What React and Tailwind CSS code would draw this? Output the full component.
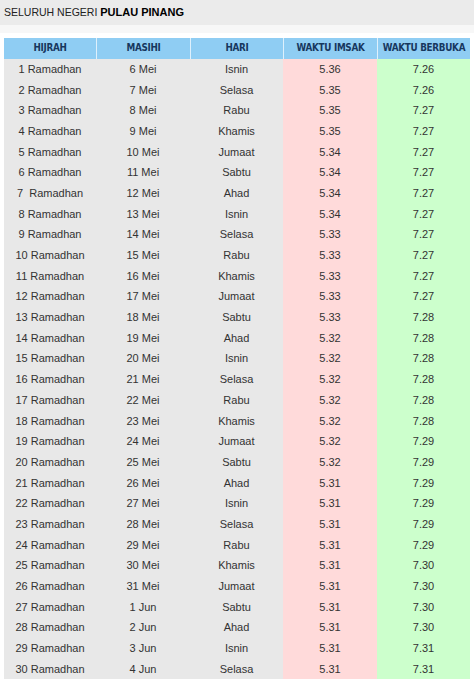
import React from 'react';

const days = ['Isnin', 'Selasa', 'Rabu', 'Khamis', 'Jumaat', 'Sabtu', 'Ahad'];
const masihi = [
  '6 Mei', '7 Mei', '8 Mei', '9 Mei', '10 Mei', '11 Mei', '12 Mei', '13 Mei', '14 Mei', '15 Mei',
  '16 Mei', '17 Mei', '18 Mei', '19 Mei', '20 Mei', '21 Mei', '22 Mei', '23 Mei', '24 Mei', '25 Mei',
  '26 Mei', '27 Mei', '28 Mei', '29 Mei', '30 Mei', '31 Mei', '1 Jun', '2 Jun', '3 Jun', '4 Jun',
];
const imsak = [
  '5.36', '5.35', '5.35', '5.35', '5.34', '5.34', '5.34', '5.34', '5.33', '5.33',
  '5.33', '5.33', '5.33', '5.32', '5.32', '5.32', '5.32', '5.32', '5.32', '5.32',
  '5.31', '5.31', '5.31', '5.31', '5.31', '5.31', '5.31', '5.31', '5.31', '5.31',
];
const berbuka = [
  '7.26', '7.26', '7.27', '7.27', '7.27', '7.27', '7.27', '7.27', '7.27', '7.27',
  '7.27', '7.27', '7.28', '7.28', '7.28', '7.28', '7.28', '7.28', '7.29', '7.29',
  '7.29', '7.29', '7.29', '7.29', '7.30', '7.30', '7.30', '7.30', '7.31', '7.31',
];

const rows = masihi.map((m, i) => ({
  hijrah: i === 6 ? '7\u00a0 Ramadhan' : `${i + 1} Ramadhan`,
  masihi: m,
  hari: days[i % 7],
  imsak: imsak[i],
  berbuka: berbuka[i],
}));

const cols = 'grid grid-cols-[92px_94px_93px_94px_93px]';

export default function App() {
  return (
    <div className="w-[474px] h-[683px] bg-white font-['Liberation_Sans',Arial,sans-serif] text-[#333]">
      <div className="h-[25px] bg-[#ebebeb] flex items-center px-[4px] text-[10.5px] text-[#222]">
        SELURUH NEGERI&nbsp;<span className="font-bold text-black text-[11px]">PULAU PINANG</span>
      </div>
      <div className="h-[8px] bg-[#f7f7f7]" />
      <div className="h-[5px]" />
      <div className="mx-[4px] w-[466px]">
        <div className={`${cols} h-[21px] bg-[#8fcdf3] text-[#17375e] font-bold text-[9.8px] font-['DejaVu_Sans_Condensed','DejaVu_Sans',sans-serif] tracking-[-0.3px]`}>
          <div className="flex items-center justify-center">HIJRAH</div>
          <div className="flex items-center justify-center border-l border-white/70">MASIHI</div>
          <div className="flex items-center justify-center border-l border-white/70">HARI</div>
          <div className="flex items-center justify-center border-l border-white/70">WAKTU IMSAK</div>
          <div className="flex items-center justify-center border-l border-white/70">WAKTU BERBUKA</div>
        </div>
        <div className="h-[620px] flex flex-col text-[11px]">
          {rows.map((r, i) => (
            <div key={i} className={`${cols} flex-1`}>
              <div className="bg-[#e8e8e8] flex items-center justify-center whitespace-pre">{r.hijrah}</div>
              <div className="bg-[#e8e8e8] flex items-center justify-center">{r.masihi}</div>
              <div className="bg-[#e8e8e8] flex items-center justify-center">{r.hari}</div>
              <div className="bg-[#ffdada] flex items-center justify-center">{r.imsak}</div>
              <div className="bg-[#ccffcc] flex items-center justify-center">{r.berbuka}</div>
            </div>
          ))}
        </div>
      </div>
    </div>
  );
}
